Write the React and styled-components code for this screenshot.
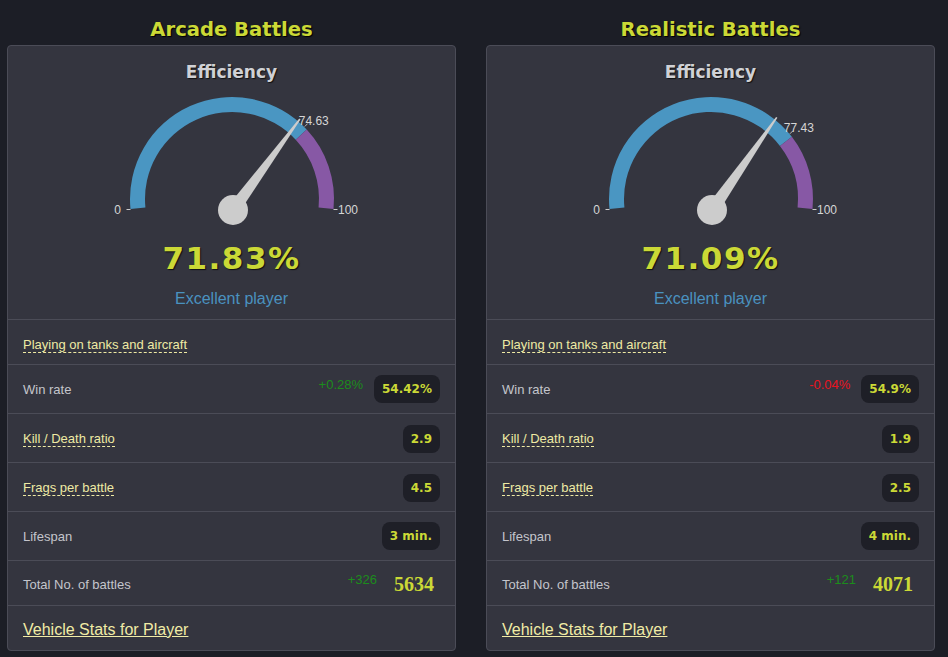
import React from 'react';
import styled, { createGlobalStyle } from 'styled-components';

const GlobalStyle = createGlobalStyle`
  html, body {
    margin: 0;
    padding: 0;
    background: #1c1e26;
  }
  body {
    font-family: "Liberation Sans", Arial, sans-serif;
    font-size: 13px;
    color: #c4c5cc;
  }
`;

const Page = styled.div`
  display: grid;
  grid-template-columns: 449px 449px;
  column-gap: 30px;
  padding-left: 7px;
  width: 948px;
  height: 657px;
  box-sizing: border-box;
  overflow: hidden;
`;

const Column = styled.div`
  display: flex;
  flex-direction: column;
`;

const Title = styled.h2`
  margin: 0;
  padding-top: 18px;
  margin-bottom: 3px;
  line-height: 24px;
  text-align: center;
  font-family: "DejaVu Sans", Verdana, sans-serif;
  font-weight: bold;
  font-size: 19.6px;
  color: #cbd936;
  text-shadow: 1px 1px 1px #000;
`;

const Card = styled.div`
  background: #34353f;
  border: 1px solid #4b4c57;
  border-radius: 4px;
  display: flex;
  flex-direction: column;
`;

const GaugeSection = styled.div`
  display: flex;
  flex-direction: column;
  align-items: center;
  padding-top: 16px;
  height: 274px;
  box-sizing: border-box;
  border-bottom: 1px solid #4b4c57;
`;

const GaugeTitle = styled.div`
  font-family: "DejaVu Sans", Verdana, sans-serif;
  font-weight: bold;
  font-size: 17px;
  line-height: 20px;
  color: #d0d1d5;
  text-shadow: 1px 1px 1px #111;
  margin-bottom: 8px;
`;

const GaugeSvg = styled.svg`
  display: block;
  width: 260px;
  height: 136px;
`;

const BigValue = styled.div`
  margin-top: 14px;
  font-family: "DejaVu Sans", Verdana, sans-serif;
  font-weight: bold;
  font-size: 31px;
  letter-spacing: 1.5px;
  line-height: 36px;
  color: #cbd936;
  text-shadow: 1px 1px 1px #111;
`;

const Rating = styled.div`
  margin-top: 13px;
  font-size: 16px;
  line-height: 20px;
  color: #4a92c0;
`;

const Row = styled.div`
  display: flex;
  align-items: center;
  justify-content: space-between;
  box-sizing: border-box;
  height: ${p => p.h}px;
  padding: ${p => p.shift || 0}px 15px 0 15px;
  border-bottom: ${p => (p.last ? 'none' : '1px solid #4b4c57')};
`;

const Label = styled.span`
  color: #c4c5cc;
  font-size: 13px;
`;

const HintLabel = styled.span`
  color: #eeeaa4;
  font-size: 13px;
  line-height: 15px;
  border-bottom: 1px dashed #eeeaa4;
`;

const Right = styled.div`
  display: flex;
  align-items: center;
  gap: ${p => p.gap || 11}px;
`;

const Delta = styled.span`
  font-size: 13px;
  color: ${p => (p.neg ? '#ea1320' : '#1c8c1c')};
  padding-bottom: 10px;
`;

const Badge = styled.span`
  display: inline-flex;
  align-items: center;
  height: 28px;
  padding: 0 8px;
  border-radius: 8px;
  background: #1e1f27;
  font-family: "DejaVu Sans", Verdana, sans-serif;
  font-weight: bold;
  font-size: 12px;
  color: #cbd936;
`;

const Total = styled.span`
  font-family: "Liberation Serif", "Times New Roman", serif;
  font-weight: bold;
  font-size: 20px;
  color: #cbd936;
  margin-right: 6px;
`;

const FooterLink = styled.a`
  color: #f1eca6;
  font-size: 16px;
  text-decoration: underline;
  cursor: pointer;
`;

const CX = 130;
const CY = 109;
const R_OUT = 102;
const R_IN = 87;
const A_MIN = -95.6;
const A_MAX = 95.6;

const pt = (a, rad, cx = CX, cy = CY) => {
  const t = (a * Math.PI) / 180;
  return [cx + rad * Math.sin(t), cy - rad * Math.cos(t)];
};

const arcPath = (a0, a1) => {
  const large = a1 - a0 > 180 ? 1 : 0;
  const [x0, y0] = pt(a0, R_OUT);
  const [x1, y1] = pt(a1, R_OUT);
  const [x2, y2] = pt(a1, R_IN);
  const [x3, y3] = pt(a0, R_IN);
  return `M${x0} ${y0} A${R_OUT} ${R_OUT} 0 ${large} 1 ${x1} ${y1} L${x2} ${y2} A${R_IN} ${R_IN} 0 ${large} 0 ${x3} ${y3} Z`;
};

function Gauge({ band, needle }) {
  const aB = A_MIN + band * 1.912;
  const [bx, by] = pt(aB, R_OUT);
  const px = 131;
  const py = 120;
  const aN = (-93 + needle * 1.8) * Math.PI / 180;
  const dx = Math.sin(aN);
  const dy = -Math.cos(aN);
  const len = 113;
  const nx = -dy;
  const ny = dx;
  const tipX = px + dx * len;
  const tipY = py + dy * len;
  const needlePts = [
    [px + nx * 6.5, py + ny * 6.5],
    [tipX + nx * 0.8, tipY + ny * 0.8],
    [tipX - nx * 0.8, tipY - ny * 0.8],
    [px - nx * 6.5, py - ny * 6.5],
  ]
    .map(p => p.join(','))
    .join(' ');

  return (
    <GaugeSvg viewBox="0 0 260 136">
      <path d={arcPath(A_MIN, aB)} fill="#4a96c2" />
      <path d={arcPath(aB, A_MAX)} fill="#8758a5" />
      <line x1="24.5" y1="119.5" x2="28.5" y2="119.5" stroke="#cccccc" strokeWidth="1" />
      <line x1="231.5" y1="119.5" x2="235.5" y2="119.5" stroke="#cccccc" strokeWidth="1" />
      <line x1={bx - 2} y1={by - 3} x2={bx + 1} y2={by - 6} stroke="#bbbbbb" strokeWidth="1" />
      <text x="19" y="124" textAnchor="end" fill="#d6d6d6" fontSize="12" fontFamily="Liberation Sans, Arial, sans-serif">0</text>
      <text x="236" y="124" fill="#d6d6d6" fontSize="12" fontFamily="Liberation Sans, Arial, sans-serif">100</text>
      <polygon points={needlePts} fill="#cccccc" />
      <circle cx={px} cy={py} r="15" fill="#cccccc" />
      <text x={bx - 8} y={by - 5} fill="#d6d6d6" fontSize="12" fontFamily="Liberation Sans, Arial, sans-serif">
        {band.toFixed(2)}
      </text>
    </GaugeSvg>
  );
}

const modes = [
  {
    title: 'Arcade Battles',
    band: 74.63,
    needle: 71.83,
    eff: '71.83%',
    winDelta: '+0.28%',
    winNeg: false,
    win: '54.42%',
    kd: '2.9',
    frags: '4.5',
    life: '3 min.',
    battlesDelta: '+326',
    battles: '5634',
  },
  {
    title: 'Realistic Battles',
    band: 77.43,
    needle: 71.09,
    eff: '71.09%',
    winDelta: '-0.04%',
    winNeg: true,
    win: '54.9%',
    kd: '1.9',
    frags: '2.5',
    life: '4 min.',
    battlesDelta: '+121',
    battles: '4071',
  },
];

function StatsCard({ m }) {
  return (
    <Column>
      <Title>{m.title}</Title>
      <Card>
        <GaugeSection>
          <GaugeTitle>Efficiency</GaugeTitle>
          <Gauge band={m.band} needle={m.needle} />
          <BigValue>{m.eff}</BigValue>
          <Rating>Excellent player</Rating>
        </GaugeSection>
        <Row h={45} shift={5}>
          <HintLabel>Playing on tanks and aircraft</HintLabel>
        </Row>
        <Row h={49}>
          <Label>Win rate</Label>
          <Right>
            <Delta neg={m.winNeg}>{m.winDelta}</Delta>
            <Badge>{m.win}</Badge>
          </Right>
        </Row>
        <Row h={49} shift={1}>
          <HintLabel>Kill / Death ratio</HintLabel>
          <Badge>{m.kd}</Badge>
        </Row>
        <Row h={49} shift={1}>
          <HintLabel>Frags per battle</HintLabel>
          <Badge>{m.frags}</Badge>
        </Row>
        <Row h={49}>
          <Label>Lifespan</Label>
          <Badge>{m.life}</Badge>
        </Row>
        <Row h={45} shift={3}>
          <Label>Total No. of battles</Label>
          <Right gap={17}>
            <Delta>{m.battlesDelta}</Delta>
            <Total>{m.battles}</Total>
          </Right>
        </Row>
        <Row h={44} shift={3} last>
          <FooterLink>Vehicle Stats for Player</FooterLink>
        </Row>
      </Card>
    </Column>
  );
}

export default function App() {
  return (
    <>
      <GlobalStyle />
      <Page>
        {modes.map(m => (
          <StatsCard key={m.title} m={m} />
        ))}
      </Page>
    </>
  );
}
